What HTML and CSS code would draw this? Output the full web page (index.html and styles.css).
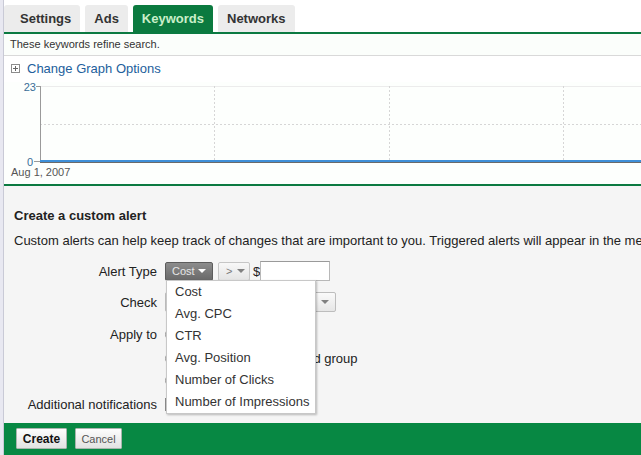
FILE: index.html
```html
<!DOCTYPE html>
<html>
<head>
<meta charset="utf-8">
<title>Custom alert</title>
<link rel="stylesheet" href="styles.css">
</head>
<body>
<div class="page">
  <div class="tabs">
    <div class="tab tab-first">Settings</div>
    <div class="tab">Ads</div>
    <div class="tab tab-active">Keywords</div>
    <div class="tab">Networks</div>
  </div>
  <div class="info">These keywords refine search.</div>
  <div class="graph-options">
    <svg class="plus-box" width="9" height="9" viewBox="0 0 9 9"><rect x="0.5" y="0.5" width="8" height="8" fill="#fff" stroke="#8c8c8c"/><path d="M2 4.5h5M4.5 2v5" stroke="#666" stroke-width="1"/></svg>
    <a class="link">Change Graph Options</a>
  </div>
  <div class="graph">
    <svg class="grid" width="637" height="102">
      <line x1="36" y1="4.5" x2="637" y2="4.5" stroke="#ececec"/>
      <line x1="36" y1="42.5" x2="637" y2="42.5" stroke="#d6d6d6" stroke-dasharray="2 2"/>
      <line x1="210.5" y1="4" x2="210.5" y2="78" stroke="#d6d6d6" stroke-dasharray="2 2"/>
      <line x1="385.5" y1="4" x2="385.5" y2="78" stroke="#d6d6d6" stroke-dasharray="2 2"/>
      <line x1="559.5" y1="4" x2="559.5" y2="78" stroke="#d6d6d6" stroke-dasharray="2 2"/>
      <line x1="36.5" y1="4" x2="36.5" y2="80" stroke="#9a9a9a"/>
      <line x1="32" y1="4.5" x2="36" y2="4.5" stroke="#9a9a9a"/>
      <line x1="30" y1="79.5" x2="36" y2="79.5" stroke="#9a9a9a"/>
      <rect x="36" y="78" width="601" height="2" fill="#3e8fd8"/>
      <rect x="36" y="80" width="601" height="1" fill="#6a6a6a"/>
    </svg>
    <span class="ylabel ylabel-top">23</span>
    <span class="ylabel ylabel-bottom">0</span>
    <span class="xlabel">Aug 1, 2007</span>
  </div>
  <div class="alert-form">
    <h2 class="title">Create a custom alert</h2>
    <p class="desc">Custom alerts can help keep track of changes that are important to you. Triggered alerts will appear in the messages center.</p>
    <div class="row row-alert">
      <span class="lbl">Alert Type</span>
      <div class="ctrl">
        <div class="menu-wrap">
          <div class="btn-cost">Cost <span class="caret caret-light"></span></div>
          <ul class="menu">
            <li>Cost</li>
            <li>Avg. CPC</li>
            <li>CTR</li>
            <li>Avg. Position</li>
            <li>Number of Clicks</li>
            <li>Number of Impressions</li>
          </ul>
        </div>
        <div class="btn-op">&gt; <span class="caret caret-dark"></span></div>
        <span class="dollar">$</span>
        <span class="amount"></span>
      </div>
    </div>
    <div class="row row-check">
      <span class="lbl">Check</span>
      <div class="ctrl">
        <div class="select"><span></span><span class="caret caret-dark"></span></div>
      </div>
    </div>
    <div class="row row-apply">
      <span class="lbl">Apply to</span>
      <div class="ctrl"><span class="radio"></span></div>
    </div>
    <div class="row row-sub">
      <span class="lbl"></span>
      <div class="ctrl"><span class="radio"></span><span class="opt">All keywords in this ad group</span></div>
    </div>
    <div class="row row-sub2">
      <span class="lbl"></span>
      <div class="ctrl"><span class="radio"></span></div>
    </div>
    <div class="row row-notify">
      <span class="lbl">Additional notifications</span>
      <div class="ctrl"><span class="checkbox"></span></div>
    </div>
  </div>
  <div class="actions">
    <button class="btn btn-create">Create</button>
    <button class="btn btn-cancel">Cancel</button>
  </div>
</div>
</body>
</html>
```

FILE: styles.css
```css
html, body {
  margin: 0;
  padding: 0;
}
body {
  background: #e8e8f1;
  font-family: "Liberation Sans", Arial, sans-serif;
  color: #222;
  overflow: hidden;
}
.page {
  margin-left: 3px;
  border-left: 1px solid #c9cad6;
  background: #fff;
  height: 455px;
  overflow: hidden;
}

/* tabs */
.tabs {
  display: flex;
  gap: 5px;
  padding-top: 5px;
  height: 27px;
  border-bottom: 2px solid #0b7a41;
}
.tab {
  padding: 0 9px;
  line-height: 27px;
  background: #ececec;
  border-radius: 3px 3px 0 0;
  font-weight: bold;
  font-size: 13px;
  color: #333;
}
.tab-first {
  padding-left: 16px;
}
.tab-active {
  background: #0b7a3f;
  color: #c9efc9;
}

/* info */
.info {
  height: 21px;
  line-height: 21px;
  font-size: 11px;
  padding-left: 6px;
  color: #333;
  background: #fbfefb;
  border-bottom: 1px solid #d9d9d9;
}

.graph-options {
  height: 26px;
  display: flex;
  align-items: center;
  padding-left: 7px;
  gap: 7px;
}
.plus-box {
  display: block;
  margin-top: -1px;
}
.link {
  color: #23609c;
  font-size: 13px;
  line-height: 18px;
}

/* graph */
.graph {
  position: relative;
  height: 102px;
  border-bottom: 2px solid #0b7a41;
  background: #fdfffd;
}
.grid {
  display: block;
}
.ylabel {
  position: absolute;
  left: 0;
  font-size: 11px;
  line-height: 10px;
  color: #3a6e98;
  text-align: right;
}
.ylabel-top {
  width: 32px;
  top: 0;
}
.ylabel-bottom {
  width: 29px;
  top: 75px;
}
.xlabel {
  position: absolute;
  left: 7px;
  top: 85px;
  font-size: 11px;
  line-height: 10px;
  color: #555;
}

/* form */
.alert-form {
  background: #f5f5f5;
  padding: 21px 0 8px 10px;
  height: 208px;
}
.title {
  margin: 0;
  font-size: 13px;
  line-height: 18px;
  font-weight: bold;
  color: #222;
}
.desc {
  margin: 7px 0 0;
  font-size: 13px;
  line-height: 18px;
  white-space: nowrap;
  color: #222;
}
.row {
  display: grid;
  grid-template-columns: 143px auto;
  column-gap: 8px;
  height: 22px;
  align-items: center;
  font-size: 13px;
}
.row-alert { margin-top: 10px; }
.row-check { margin-top: 9px; }
.row-apply { margin-top: 10px; }
.row-sub { margin-top: 2px; }
.row-sub2 { margin-top: 0; }
.row-notify { margin-top: 2px; }
.lbl {
  text-align: right;
  color: #222;
}
.ctrl {
  display: flex;
  align-items: center;
}

.menu-wrap {
  position: relative;
}
.btn-cost {
  box-sizing: border-box;
  display: flex;
  align-items: center;
  gap: 3px;
  width: 48px;
  height: 19px;
  padding-left: 6px;
  background: linear-gradient(#8c8c8c, #696969);
  border: 1px solid #5c5c5c;
  border-radius: 2px;
  color: #e6e6e6;
  font-size: 11px;
}
.caret {
  display: inline-block;
  width: 0;
  height: 0;
  border-left: 4px solid transparent;
  border-right: 4px solid transparent;
  border-top: 4px solid #fff;
}
.caret-light { border-top-color: #fff; }
.caret-dark { border-top-color: #808080; }

.menu {
  position: absolute;
  top: 100%;
  left: 1px;
  box-sizing: border-box;
  width: 150px;
  margin: -1px 0 0;
  padding: 0;
  list-style: none;
  background: #fff;
  border: 1px solid #c8c8c8;
  box-shadow: 1px 1px 2px rgba(0, 0, 0, 0.25);
  z-index: 5;
}
.menu li {
  height: 22px;
  line-height: 22px;
  padding-left: 8px;
  font-size: 13px;
  color: #333;
}

.btn-op {
  box-sizing: border-box;
  display: flex;
  align-items: center;
  gap: 5px;
  margin-left: 5px;
  width: 32px;
  height: 19px;
  padding-left: 7px;
  background: linear-gradient(#f8f8f8, #e4e4e4);
  border: 1px solid #c6c6c6;
  border-radius: 2px;
  color: #7a7a7a;
  font-size: 11px;
}
.dollar {
  margin-left: 3px;
  font-size: 13px;
  color: #222;
}
.amount {
  display: block;
  box-sizing: border-box;
  margin-left: 0;
  width: 70px;
  height: 20px;
  background: #fff;
  border: 1px solid #b8b8b8;
  border-top-color: #9a9a9a;
}

.select {
  box-sizing: border-box;
  display: flex;
  align-items: center;
  justify-content: space-between;
  width: 171px;
  height: 20px;
  padding: 0 6px;
  background: linear-gradient(#fafafa, #e6e6e6);
  border: 1px solid #bdbdbd;
  border-radius: 2px;
  font-size: 12px;
  color: #333;
}

.radio {
  display: inline-block;
  box-sizing: border-box;
  width: 13px;
  height: 13px;
  border: 1px solid #9a9a9a;
  border-radius: 50%;
  background: #fff;
}
.checkbox {
  display: inline-block;
  box-sizing: border-box;
  width: 13px;
  height: 13px;
  border: 1px solid #8a8a8a;
  background: #fff;
}
.opt {
  margin-left: 14px;
  color: #222;
  white-space: nowrap;
}

/* actions */
.actions {
  box-sizing: border-box;
  height: 32px;
  padding: 5px 0 0 12px;
  display: flex;
  align-items: flex-start;
  gap: 8px;
  background: #078843;
}
.btn {
  box-sizing: border-box;
  height: 21px;
  margin: 0;
  padding: 0;
  font-family: inherit;
  background: linear-gradient(#fdfdfd, #e2e2e2);
  border: 1px solid #a9b5ad;
  border-radius: 1px;
}
.btn-create {
  width: 51px;
  font-size: 12px;
  font-weight: bold;
  color: #111;
}
.btn-cancel {
  width: 47px;
  font-size: 11px;
  color: #555;
}
```
